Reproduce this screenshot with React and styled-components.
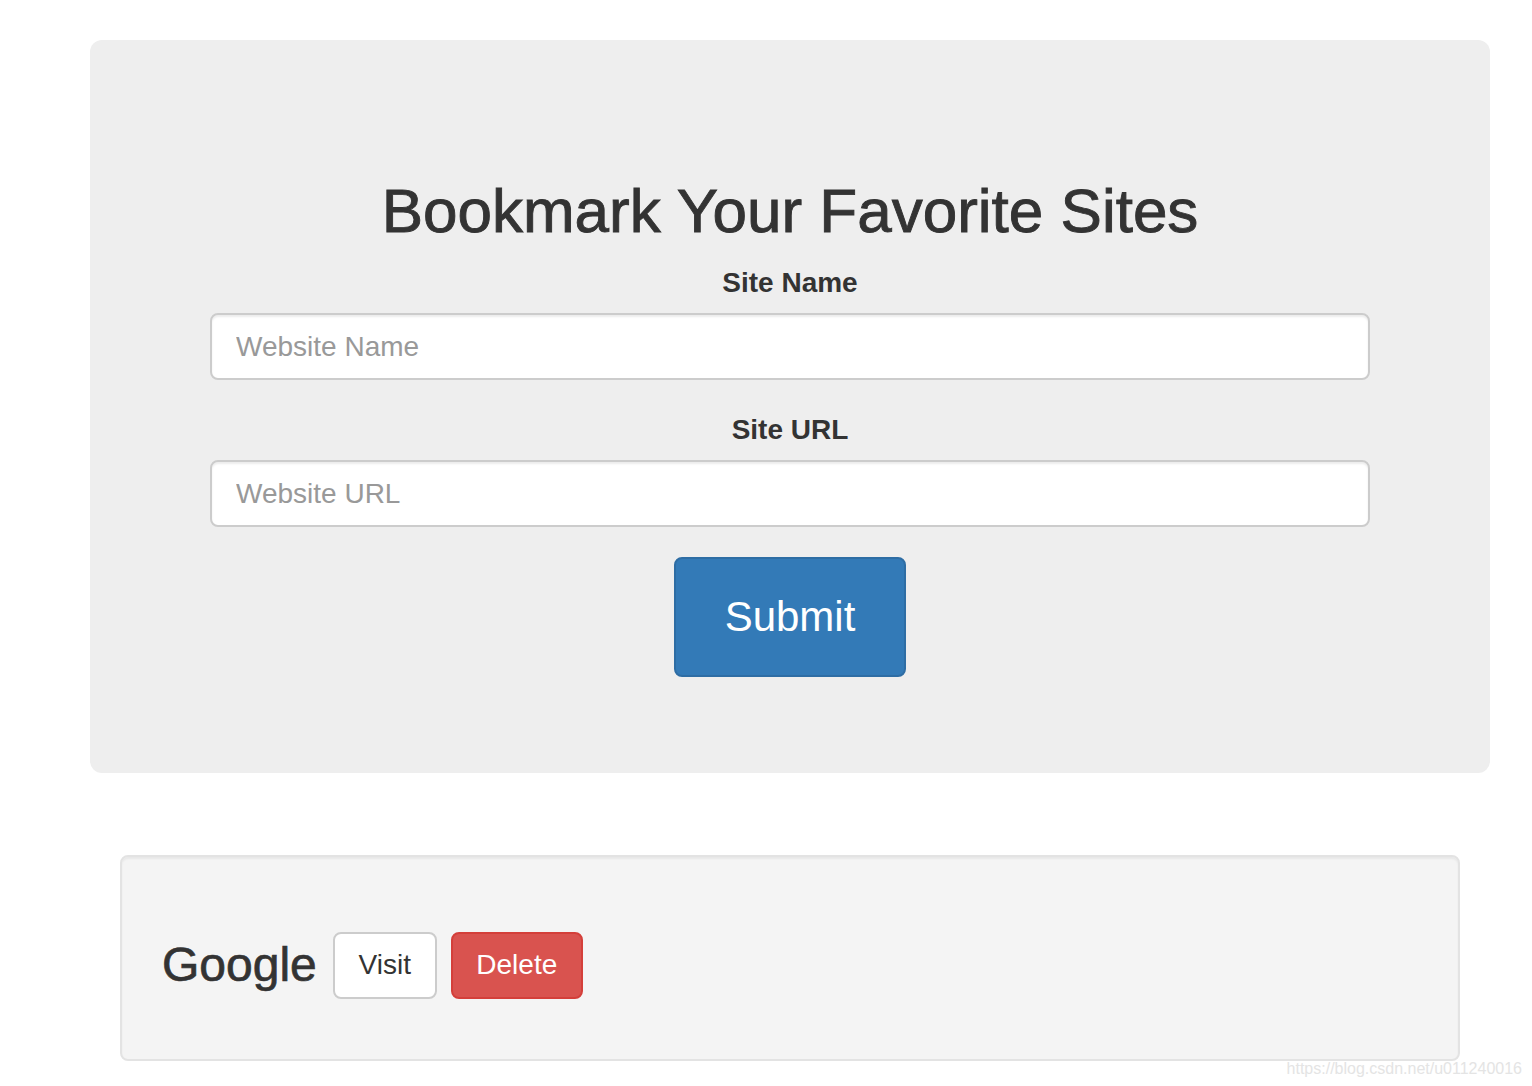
import React, { useState } from "react";
import styled, { createGlobalStyle } from "styled-components";

const GlobalStyle = createGlobalStyle`
  html, body {
    margin: 0;
    padding: 0;
    background: #fff;
    font-family: "Liberation Sans", Arial, Helvetica, sans-serif;
    color: #333;
  }
`;

const Page = styled.div`
  position: relative;
  width: 1532px;
  height: 1086px;
  overflow: hidden;
  padding-top: 40px;
  box-sizing: border-box;
`;

const Container = styled.div`
  width: 1400px;
  margin-left: 90px;
`;

const Jumbotron = styled.div`
  background: #eee;
  border-radius: 12px;
  padding: 137px 120px 96px;
  display: flex;
  flex-direction: column;
  align-items: center;
`;

const Title = styled.h1`
  margin: 0 0 18px;
  font-size: 62px;
  line-height: 68px;
  font-weight: 400;
  color: #333;
  -webkit-text-stroke: 0.9px #333;
`;

const Form = styled.form`
  width: 100%;
  display: flex;
  flex-direction: column;
  align-items: center;
`;

const Group = styled.div`
  width: 100%;
  display: flex;
  flex-direction: column;
  align-items: center;
  margin-bottom: ${(p) => p.$gap || 30}px;
`;

const Label = styled.label`
  font-size: 28px;
  line-height: 40px;
  font-weight: 700;
  margin-bottom: 10px;
`;

const Input = styled.input`
  width: 100%;
  height: 67px;
  box-sizing: border-box;
  border: 2px solid #ccc;
  border-radius: 8px;
  padding: 0 24px;
  font-family: inherit;
  font-size: 28px;
  color: #555;
  background: #fff;
  box-shadow: inset 0 2px 2px rgba(0, 0, 0, 0.075);
  outline: none;
  &::placeholder {
    color: #999;
  }
`;

const Button = styled.button`
  font-family: inherit;
  cursor: pointer;
  box-sizing: border-box;
  border: 2px solid ${(p) => p.$border};
  background: ${(p) => p.$bg};
  color: ${(p) => p.$color};
  border-radius: 8px;
  font-size: ${(p) => p.$size || 28}px;
  height: ${(p) => p.$h}px;
  width: ${(p) => p.$w}px;
  padding: 0;
`;

const Well = styled.div`
  margin: 82px 30px 0;
  height: 206px;
  box-sizing: border-box;
  background: #f4f4f4;
  border: 2px solid #e3e3e3;
  border-radius: 8px;
  box-shadow: inset 0 2px 2px rgba(0, 0, 0, 0.05);
  display: flex;
  align-items: center;
  padding: 0 40px 0 40px;
`;

const Row = styled.div`
  display: flex;
  align-items: center;
  gap: 14px;
  margin-top: 14px;
`;

const SiteName = styled.h3`
  margin: 0 2px 0 0;
  font-size: 48px;
  font-weight: 500;
  line-height: 1;
  color: #333;
  -webkit-text-stroke: 0.7px #333;
`;

const Watermark = styled.div`
  position: absolute;
  right: 10px;
  bottom: 8px;
  font-size: 16px;
  color: #e4e4e4;
  text-shadow: 0 0 1px #fff;
`;

export default function App() {
  const [name, setName] = useState("");
  const [url, setUrl] = useState("");

  return (
    <Page>
      <GlobalStyle />
      <Container>
        <Jumbotron>
          <Title>Bookmark Your Favorite Sites</Title>
          <Form onSubmit={(e) => e.preventDefault()}>
            <Group>
              <Label>Site Name</Label>
              <Input
                placeholder="Website Name"
                value={name}
                onChange={(e) => setName(e.target.value)}
              />
            </Group>
            <Group $gap={30}>
              <Label>Site URL</Label>
              <Input
                placeholder="Website URL"
                value={url}
                onChange={(e) => setUrl(e.target.value)}
              />
            </Group>
            <Button
              type="submit"
              $bg="#337ab7"
              $border="#2e6da4"
              $color="#fff"
              $size={42}
              $w={232}
              $h={120}
            >
              Submit
            </Button>
          </Form>
        </Jumbotron>
        <Well>
          <Row>
            <SiteName>Google</SiteName>
            <Button $bg="#fff" $border="#ccc" $color="#333" $w={104} $h={67}>
              Visit
            </Button>
            <Button $bg="#d9534f" $border="#d43f3a" $color="#fff" $w={132} $h={67}>
              Delete
            </Button>
          </Row>
        </Well>
      </Container>
      <Watermark>https://blog.csdn.net/u011240016</Watermark>
    </Page>
  );
}
